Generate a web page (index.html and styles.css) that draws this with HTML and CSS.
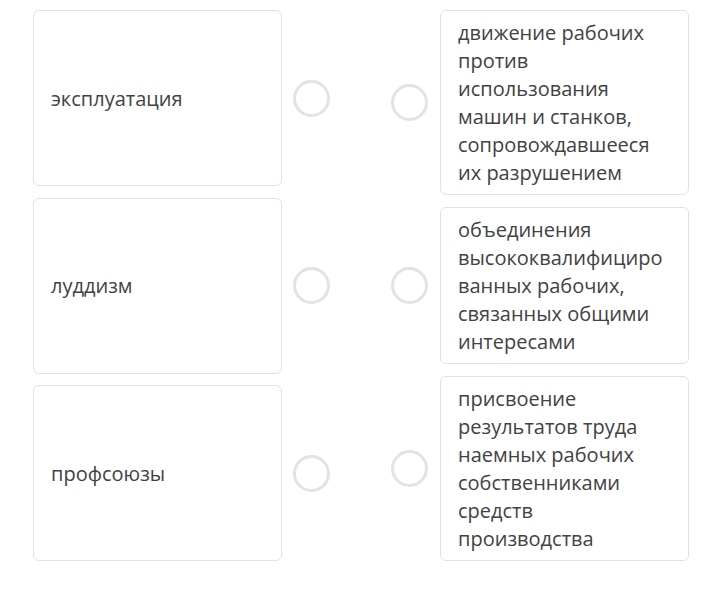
FILE: index.html
```html
<!DOCTYPE html>
<html lang="ru">
<head>
<meta charset="utf-8">
<link rel="stylesheet" href="styles.css">
</head>
<body>
<div class="board">
  <div class="col col-left">
    <div class="item">
      <div class="card card-term"><span>эксплуатация</span></div>
      <div class="dot"></div>
    </div>
    <div class="item">
      <div class="card card-term"><span>луддизм</span></div>
      <div class="dot"></div>
    </div>
    <div class="item">
      <div class="card card-term"><span>профсоюзы</span></div>
      <div class="dot"></div>
    </div>
  </div>
  <div class="col col-right">
    <div class="item">
      <div class="dot"></div>
      <div class="card card-def">движение рабочих против использования машин и станков, сопровождавшееся их разрушением</div>
    </div>
    <div class="item">
      <div class="dot"></div>
      <div class="card card-def">объединения высококвалифицированных рабочих, связанных общими интересами</div>
    </div>
    <div class="item">
      <div class="dot"></div>
      <div class="card card-def">присвоение результатов труда наемных рабочих собственниками средств производства</div>
    </div>
  </div>
</div>
</body>
</html>
```

FILE: styles.css
```css
html, body {
  margin: 0;
  padding: 0;
  background: #ffffff;
}
body {
  font-family: "Open Sans", "Liberation Sans", sans-serif;
  font-size: 20px;
  color: #424242;
}
.board {
  display: flex;
  padding: 10px 0 0 33px;
  gap: 61px;
}
.col {
  display: flex;
  flex-direction: column;
  justify-content: space-between;
  height: 551px;
}
.item {
  display: flex;
  align-items: center;
}
.col-left .item {
  gap: 11px;
}
.col-right .item {
  gap: 12px;
}
.card {
  width: 249px;
  box-sizing: border-box;
  border: 1px solid #e1e1e1;
  border-radius: 6px;
  background: #fff;
}
.card-term {
  height: 176px;
  display: flex;
  align-items: center;
  padding: 0 17px;
}
.card-def {
  padding: 8px 17px 7px;
  line-height: 28px;
  overflow-wrap: break-word;
}
.dot {
  width: 37px;
  height: 37px;
  box-sizing: border-box;
  border: 3px solid #e3e3e3;
  border-radius: 50%;
  flex: none;
}
```
